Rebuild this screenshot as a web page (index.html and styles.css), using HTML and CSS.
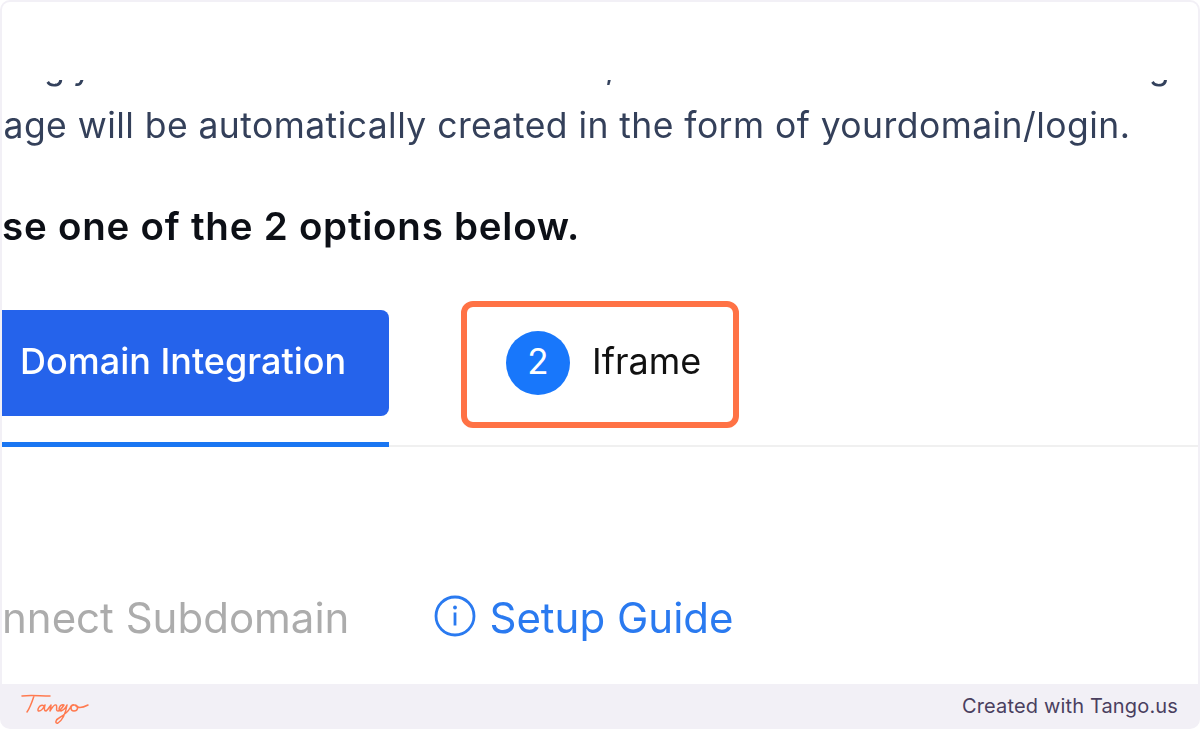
FILE: index.html
```html
<!DOCTYPE html>
<html lang="en">
<head>
<meta charset="utf-8">
<title>Tango step</title>
<link rel="stylesheet" href="styles.css">
</head>
<body>
<div class="frame">
  <main class="panel">
    <div class="cut">
      <div class="cut-row">
        <span class="cut-g1">g</span><span class="cut-y">y</span><span class="cut-comma">,</span><span class="cut-g2">g</span>
      </div>
    </div>
    <p class="para">page will be automatically created in the form of yourdomain/login.</p>
    <p class="lead">se one of the 2 options below.</p>
    <div class="tabs">
      <div class="tab-active">
        <div class="tab-button"><span class="tab-button-text">Domain Integration</span></div>
      </div>
      <div class="tab-next">
        <span class="num"><span class="num-text">2</span></span>
        <span class="tab-label">Iframe</span>
      </div>
    </div>
    <div class="links">
      <span class="connect">nnect Subdomain</span>
      <span class="guide">
        <svg class="info" viewBox="0 0 42 42" width="42" height="42" aria-hidden="true">
          <circle cx="21" cy="21" r="19" fill="none" stroke="#2a7af0" stroke-width="2.8"/>
          <circle cx="21" cy="12.5" r="1.9" fill="#2a7af0"/>
          <rect x="19.6" y="17.5" width="2.8" height="13" fill="#2a7af0"/>
        </svg>
        <span>Setup Guide</span>
      </span>
    </div>
  </main>
  <footer class="bar">
    <svg class="logo" viewBox="0 0 70 32" width="70" height="32" aria-label="Tango" role="img">
      <path d="M2 3 C10 2 20 3 30 3 M14 3 C12 9 10 15 7 19 M24 13 C20 10 16 18 19 18 C22 18 24 14 25 12 C24 15 24 18 26 18 C28 17 30 13 31 12 C31 14 30 17 30 18 C32 15 34 11 36 12 C38 13 35 18 38 18 C40 18 42 15 44 12 C40 10 37 18 41 18 C44 17 46 14 47 12 C46 18 44 26 38 30 C35 31 35 27 39 25 C44 22 48 19 50 15 C51 12 54 11 54 12 C50 12 50 18 54 18 C58 18 59 13 55 12 C57 15 62 15 68 12" fill="none" stroke="#ff7a50" stroke-width="1.5" stroke-linecap="round" stroke-linejoin="round"/>
    </svg>
    <span class="credit">Created with Tango.us</span>
  </footer>
</div>
</body>
</html>
```
FILE: styles.css
```css
* { box-sizing: border-box; }
html, body { margin: 0; padding: 0; background: #fff; }
.frame {
  width: 1200px;
  height: 729px;
  background: #f2f0f6;
  border-radius: 10px;
  padding: 2px 2px 0;
  display: flex;
  flex-direction: column;
  overflow: hidden;
  font-family: Inter, "Liberation Sans", sans-serif;
}
.panel {
  height: 682px;
  background: #fff;
  border-radius: 8px 8px 0 0;
  overflow: hidden;
  padding-top: 78px;
  white-space: nowrap;
}
.cut { height: 7px; overflow: hidden; }
.cut-row {
  display: flex;
  margin-top: -33px;
  font-size: 34px;
  line-height: 40px;
  color: #33415c;
  filter: blur(0.4px);
}
.cut-g1 { margin-left: 42px; }
.cut-y { margin-left: 8px; }
.cut-comma { margin-left: 513px; }
.cut-g2 { margin-left: 534px; }
.para {
  margin: 17px 0 0 -21px;
  font-size: 35.5px;
  line-height: 44px;
  color: #34405a;
  letter-spacing: 0.44px;
  filter: blur(0.4px);
}
.lead {
  margin: 55px 0 0 0;
  font-size: 38.5px;
  line-height: 46px;
  font-weight: 600;
  color: #0c0f16;
  letter-spacing: 0.77px;
  filter: blur(0.4px);
}
.tabs {
  display: flex;
  align-items: flex-start;
  margin-top: 52px;
  height: 146px;
  border-bottom: 2px solid #f0f0f0;
}
.tab-active {
  width: 387px;
  height: 146px;
  padding-top: 9px;
  border-bottom: 5px solid #1a76f2;
}
.tab-button {
  height: 106px;
  background: #2563eb;
  border-radius: 0 8px 8px 0;
  display: flex;
  align-items: center;
  padding-left: 18px;
  color: #fff;
  font-size: 36px;
  font-weight: 500;
  filter: blur(0.3px);
}
.tab-button-text { margin-top: -4px; }
.tab-next {
  width: 278px;
  height: 127px;
  margin-left: 72px;
  border: 6px solid #ff7245;
  border-radius: 12px;
  display: flex;
  align-items: center;
  padding-left: 39px;
  gap: 22px;
}
.num {
  width: 64px;
  height: 64px;
  border-radius: 50%;
  background: #1877fb;
  color: #fff;
  font-size: 35px;
  display: flex;
  align-items: center;
  justify-content: center;
  margin-top: -4px;
}
.num-text { margin-top: -3px; }
.tab-label { font-size: 36px; color: #111; margin-top: -8px; filter: blur(0.3px); }
.links {
  display: flex;
  align-items: center;
  margin-top: 146px;
  font-size: 42px;
  line-height: 50px;
  filter: blur(0.4px);
}
.connect { color: #acacac; }
.guide {
  display: flex;
  align-items: center;
  gap: 13px;
  margin-left: 85px;
  color: #2a7af0;
}
.info { flex: none; margin-top: -4px; }
.bar {
  flex: 1;
  display: flex;
  align-items: center;
  justify-content: space-between;
  padding: 0 20px 0 18px;
}
.logo { flex: none; margin-top: 4px; }
.credit {
  font-size: 20px;
  color: #4a3f5f;
  letter-spacing: 0.15px;
  margin-top: -2px;
}
```
